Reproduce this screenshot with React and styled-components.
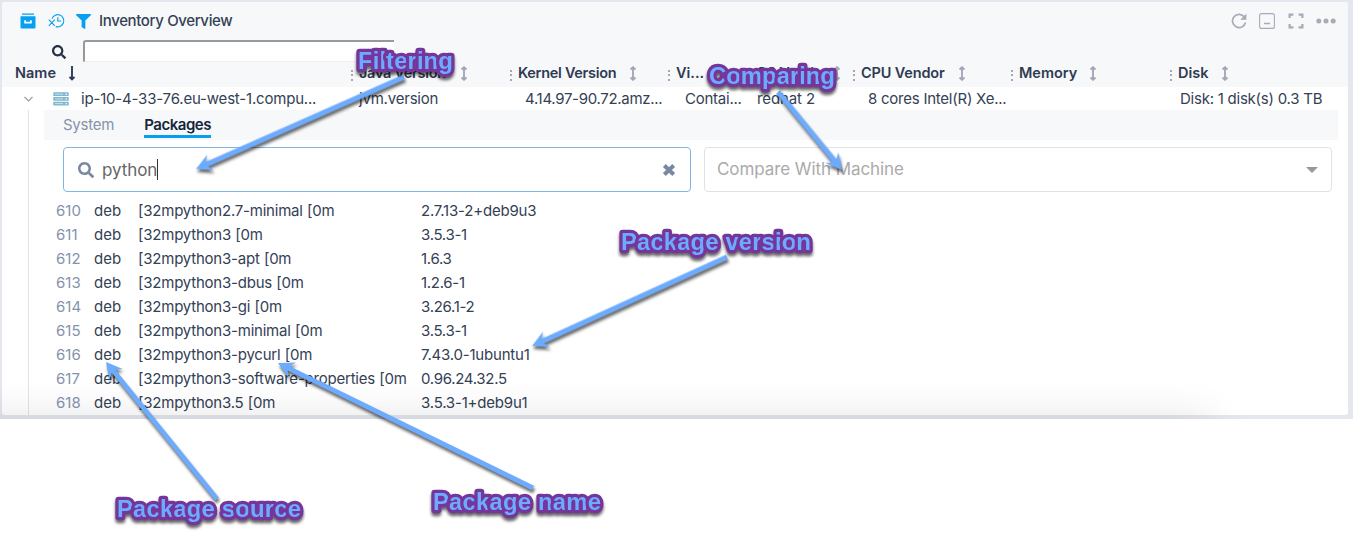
import React from "react";
import styled, { createGlobalStyle } from "styled-components";
import { FaFilter, FaSearch } from "react-icons/fa";

const GlobalStyle = createGlobalStyle`
  *, *::before, *::after { box-sizing: border-box; }
  body { margin: 0; background: #fff; color: #334155; font: 15px/24px Inter, "Liberation Sans", sans-serif; }
`;

const Page = styled.div`
  position: relative;
  width: 1353px;
  height: 547px;
  overflow: hidden;
`;

const Frame = styled.main`
  position: relative;
  height: 419px;
  padding: 2px 5px 4px 2px;
  background: #e4e7ed;
  overflow: hidden;
  &::after {
    content: "";
    position: absolute;
    left: -60px;
    top: 423px;
    width: 1270px;
    height: 60px;
    box-shadow: 0 0 46px rgba(0, 0, 0, 0.14);
  }
`;

const Panel = styled.section`
  height: 413px;
  border-radius: 3px;
  background: #fff;
  overflow: hidden;
`;

const PanelHead = styled.header`
  height: 85px;
  background: #f7f8fa;
`;

const TitleBar = styled.div`
  display: flex;
  align-items: center;
  height: 38px;
  padding: 0 12px 0 18px;
`;

const TitleIcons = styled.div`
  display: flex;
  align-items: center;
  gap: 11.5px;
  width: 79px;
  color: #07a0f0;
`;

const Title = styled.h1`
  margin: 0;
  flex: 1;
  font-size: 15px;
  font-weight: 500;
  letter-spacing: -0.36px;
`;

const Actions = styled.div`
  display: flex;
  align-items: center;
  gap: 12.5px;
  color: #a6abb5;
`;

const QuickFilter = styled.div`
  display: flex;
  height: 24px;
  padding-left: 50px;
  color: #263247;
  svg { margin-top: 5px; }
`;

const QuickInput = styled.div`
  width: 311px;
  height: 22px;
  margin-left: 17px;
  border: solid #999;
  border-width: 2px 0 1px 2px;
  border-bottom-color: #eee;
  border-radius: 3px 0 0 0;
  background: #fff;
`;

const HeadRow = styled.div`
  display: flex;
  height: 23px;
  padding-left: 13px;
`;

const HeadCell = styled.div`
  display: flex;
  align-items: center;
  width: ${(p) => p.$w}px;
  height: 18px;
  font-size: 14.5px;
  font-weight: 600;
  color: #2f3b52;
  white-space: nowrap;
  letter-spacing: ${(p) => p.$tracking || 0}px;
`;

const Grip = styled.i`
  width: 2px;
  height: 11px;
  margin: 4px 6px 0 0;
  background: repeating-linear-gradient(#a7a6b8 0 2px, transparent 2px 4.5px);
`;

const Sort = styled.svg`
  margin-left: ${(p) => p.$gap}px;
  flex: none;
`;

const MachineRow = styled.div`
  display: flex;
  align-items: center;
  height: 23px;
  padding-left: 21px;
`;

const Cell = styled.span`
  width: ${(p) => p.$w}px;
  flex: none;
  white-space: nowrap;
  letter-spacing: ${(p) => p.$tracking ?? -0.24}px;
`;

const IconCell = styled.span`
  display: flex;
  width: ${(p) => p.$w}px;
`;

const Detail = styled.div`
  margin-left: 26px;
  height: 305px;
  border-left: 1px solid #dfe3ec;
  padding-left: 15px;
`;

const Tabs = styled.nav`
  display: flex;
  gap: 30px;
  width: 1294px;
  height: 30px;
  padding: 2px 0 0 19px;
  background: #f7f8fa;
`;

const Tab = styled.span`
  height: 26px;
  line-height: 26px;
  font-weight: ${(p) => (p.$active ? 600 : 400)};
  color: ${(p) => (p.$active ? "#15253c" : "#8593ab")};
  border-bottom: 3px solid ${(p) => (p.$active ? "#079fee" : "transparent")};
  letter-spacing: ${(p) => (p.$active ? -0.45 : -0.25)}px;
`;

const Fields = styled.div`
  display: flex;
  gap: 13px;
  padding: 7px 0 0 19px;
`;

const Field = styled.div`
  display: flex;
  align-items: center;
  width: 628px;
  height: 45px;
  padding: ${(p) => (p.$focus ? "0 14px" : "0 13px 0 12px")};
  border: 1px solid ${(p) => (p.$focus ? "#7db7e6" : "#e0e2e6")};
  border-radius: 4px;
  font-size: 17px;
  color: ${(p) => (p.$focus ? "#666" : "#aaa")};
  svg { color: #7888a3; }
`;

const Value = styled.span`
  flex: 1;
  display: flex;
  align-items: center;
  margin: ${(p) => (p.$inset ? "0 0 0 8px" : "-1px 0 0")};
  letter-spacing: -0.08px;
`;

const Caret = styled.i`
  width: 1px;
  height: 21px;
  background: #333;
`;

const Triangle = styled.i`
  border: 6px solid transparent;
  border-top-color: #999;
  border-bottom: 0;
`;

const PackageList = styled.div`
  padding: 7px 0 0 12px;
`;

const PackageRow = styled.div`
  display: grid;
  grid-template-columns: 38px 44px 283px 1fr;
  height: 24px;
`;

const Index = styled.span`
  color: #8593ab;
`;

const PackageName = styled.span`
  letter-spacing: -0.22px;
  word-spacing: 0.3px;
`;

const PackageVersion = styled.span`
  letter-spacing: ${(p) => (p.$long ? -0.2 : -0.3)}px;
`;

const Annotations = styled.svg`
  position: absolute;
  left: 0;
  top: 0;
`;

const ArrowLayer = styled.g`
  fill: #6dabff;
  filter: drop-shadow(1px 3px 1.5px rgba(0, 0, 0, 0.6));
`;

const CalloutLayer = styled.g`
  font: bold 24px "Liberation Sans", Arial, sans-serif;
  fill: #6dabff;
  stroke: #76359b;
  stroke-width: 6.5px;
  stroke-linejoin: round;
  paint-order: stroke;
  filter: drop-shadow(0.5px 3px 1.5px rgba(0, 0, 0, 0.6));
`;

const columns = [
  { label: "Name", w: 336, gap: 12.5, down: true },
  { label: "Java Version", w: 159, gap: 14, tracking: -0.3 },
  { label: "Kernel Version", w: 158, gap: 13, tracking: -0.3 },
  { label: "Vi...", w: 80, gap: 13 },
  { label: "OS Version", w: 105, gap: 2, tracking: -0.3 },
  { label: "CPU Vendor", w: 158, gap: 13.5, tracking: -0.15 },
  { label: "Memory", w: 159, gap: 12 },
  { label: "Disk", w: 150, gap: 12 },
];

const packages = [
  ["610", "[32mpython2.7-minimal [0m", "2.7.13-2+deb9u3"],
  ["611", "[32mpython3 [0m", "3.5.3-1"],
  ["612", "[32mpython3-apt [0m", "1.6.3"],
  ["613", "[32mpython3-dbus [0m", "1.2.6-1"],
  ["614", "[32mpython3-gi [0m", "3.26.1-2"],
  ["615", "[32mpython3-minimal [0m", "3.5.3-1"],
  ["616", "[32mpython3-pycurl [0m", "7.43.0-1ubuntu1"],
  ["617", "[32mpython3-software-properties [0m", "0.96.24.32.5"],
  ["618", "[32mpython3.5 [0m", "3.5.3-1+deb9u1"],
];

const pointers = [
  [404, 77, 196, 169],
  [778, 92, 842, 170],
  [727, 257, 532, 346],
  [217, 499, 106, 362],
  [533, 488, 278, 363],
];

const callouts = [
  ["Filtering", 358, 69, 95],
  ["Comparing", 709, 83.5, 126],
  ["Package version", 621, 249.8, 190],
  ["Package source", 117, 517, 184],
  ["Package name", 433, 510, 168],
];

function Pointer({ from: [x1, y1, x2, y2] }) {
  const length = Math.hypot(x2 - x1, y2 - y1);
  const angle = (Math.atan2(y2 - y1, x2 - x1) * 180) / Math.PI;
  return (
    <path
      transform={`translate(${x1} ${y1}) rotate(${angle})`}
      d={`M0-2.4H${length - 12}L${length - 16}-8.5L${length} 0L${length - 16} 8.5L${length - 12} 2.4H0Z`}
    />
  );
}

function SortIcon({ gap, down }) {
  return (
    <Sort $gap={gap} width="8" height="15" viewBox="0 0 8 15">
      <path
        d={down ? "M4 0V13M1.5 10.8L4 13.3L6.5 10.8" : "M4 2V13M1.5 3.5L4 1.2L6.5 3.5M1.5 11.5L4 13.8L6.5 11.5"}
        fill="none"
        stroke={down ? "#2f3b52" : "#a7a6b8"}
        strokeWidth="1.9"
      />
    </Sort>
  );
}

export default function App() {
  return (
    <Page>
      <GlobalStyle />
      <Frame>
        <Panel>
          <PanelHead>
            <TitleBar>
              <TitleIcons>
                <svg width="16" height="16" viewBox="0 0 16 16" fill="currentColor">
                  <path d="M2 .4h12v1.3H2zM.5 3.2h15v11.3a1 1 0 0 1-1 1h-13a1 1 0 0 1-1-1z" />
                  <path d="M5.1 7.3v2.3h5.8V7.3" fill="none" stroke="#fff" strokeWidth="1.7" />
                </svg>
                <svg width="17" height="16" viewBox="0 0 17 16" fill="none" stroke="currentColor" strokeWidth="1.15">
                  <path d="M4 5.6A6.1 6.1 0 1 1 7.8 13.6M9.8 4.2V8h3.4M.8 6.6l6 6.2M6.8 6.6L.8 12.8" />
                </svg>
                <FaFilter size={15} />
              </TitleIcons>
              <Title>Inventory Overview</Title>
              <Actions>
                <svg width="16" height="16" viewBox="0 0 16 16" fill="none" stroke="currentColor" strokeWidth="1.7">
                  <path d="M13.5 4.2A6.6 6.6 0 1 0 14.5 9.5" />
                  <path d="M15.4.6v6.1H9.3z" fill="currentColor" stroke="none" />
                </svg>
                <svg width="16" height="16" viewBox="0 0 16 16" fill="none" stroke="currentColor">
                  <rect x=".6" y=".6" width="14.8" height="14.8" rx="2" strokeWidth="1.1" />
                  <path d="M5 10.5h6" strokeWidth="1.7" />
                </svg>
                <svg width="16" height="16" viewBox="0 0 16 16" fill="none" stroke="currentColor" strokeWidth="2.2">
                  <path d="M1.6 5V1.6H5.4M10.6 1.6h3.8V5M14.4 11v3.4H10.6M5.4 14.4H1.6V11" />
                </svg>
                <svg width="20" height="6" viewBox="0 0 20 6" fill="currentColor">
                  <circle cx="2.8" cy="3" r="2.5" />
                  <circle cx="10" cy="3" r="2.5" />
                  <circle cx="17.2" cy="3" r="2.5" />
                </svg>
              </Actions>
            </TitleBar>
            <QuickFilter>
              <FaSearch size={14} />
              <QuickInput />
            </QuickFilter>
            <HeadRow>
              {columns.map((c, i) => (
                <HeadCell key={c.label} $w={c.w} $tracking={c.tracking}>
                  {i > 0 && <Grip />}
                  {c.label}
                  <SortIcon gap={c.gap} down={c.down} />
                </HeadCell>
              ))}
            </HeadRow>
          </PanelHead>
          <MachineRow>
            <IconCell $w={30}>
              <svg width="11" height="8" viewBox="0 0 11 8" fill="none" stroke="#989ba5" strokeWidth="1.1">
                <path d="M1.5 2l4 4L9.5 2" />
              </svg>
            </IconCell>
            <IconCell $w={28}>
              <svg width="16" height="14" viewBox="0 0 16 14">
                {[0.3, 5, 9.7].map((y) => (
                  <g key={y}>
                    <rect x=".3" y={y} width="15.4" height="3.8" rx=".6" fill="#7fb8cf" />
                    <path d={`M2 ${y + 1.9}h8`} stroke="#c5e2ee" />
                    <circle cx="13.2" cy={y + 1.9} r=".9" fill="#d8f0f8" />
                  </g>
                ))}
              </svg>
            </IconCell>
            <Cell $w={278} $tracking={-0.19}>ip-10-4-33-76.eu-west-1.compu...</Cell>
            <Cell $w={166} $tracking={-0.2}>jvm.version</Cell>
            <Cell $w={160} $tracking={-0.3}>4.14.97-90.72.amz...</Cell>
            <Cell $w={72}>Contai...</Cell>
            <Cell $w={111} $tracking={-0.1}>redhat 2</Cell>
            <Cell $w={312}>8 cores Intel(R) Xe...</Cell>
            <Cell $w={150}>Disk: 1 disk(s) 0.3 TB</Cell>
          </MachineRow>
          <Detail>
            <Tabs>
              <Tab>System</Tab>
              <Tab $active>Packages</Tab>
            </Tabs>
            <Fields>
              <Field $focus>
                <FaSearch size={16} />
                <Value $inset>python<Caret /></Value>
                <svg width="14" height="14" viewBox="0 0 14 14" fill="none" stroke="currentColor" strokeWidth="4">
                  <path d="M2.3 2.5l9.4 9M11.7 2.5l-9.4 9" />
                </svg>
              </Field>
              <Field>
                <Value>Compare With Machine</Value>
                <Triangle />
              </Field>
            </Fields>
            <PackageList>
              {packages.map(([id, name, version]) => (
                <PackageRow key={id}>
                  <Index>{id}</Index>
                  <span>deb</span>
                  <PackageName>{name}</PackageName>
                  <PackageVersion $long={version.length > 13}>{version}</PackageVersion>
                </PackageRow>
              ))}
            </PackageList>
          </Detail>
        </Panel>
      </Frame>
      <Annotations width="1353" height="547">
        <ArrowLayer>
          {pointers.map((p) => (
            <Pointer key={p.join()} from={p} />
          ))}
        </ArrowLayer>
        <CalloutLayer>
          {callouts.map(([text, x, y, w]) => (
            <text key={text} x={x} y={y} textLength={w}>{text}</text>
          ))}
        </CalloutLayer>
      </Annotations>
    </Page>
  );
}
